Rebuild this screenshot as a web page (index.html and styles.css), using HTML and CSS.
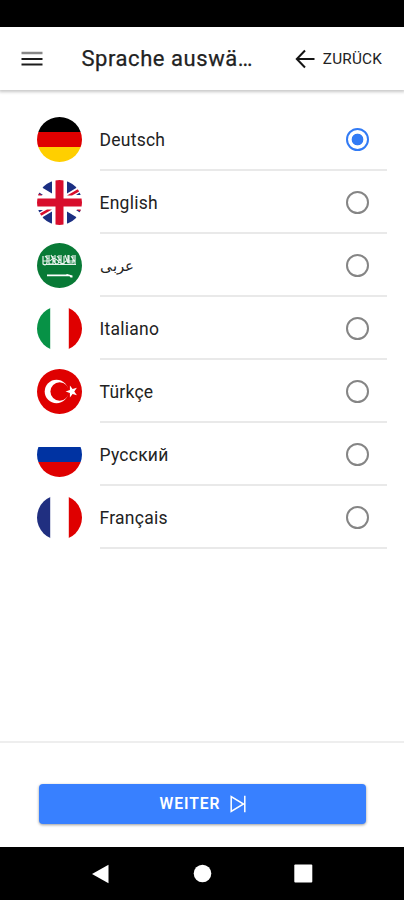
FILE: index.html
```
<!DOCTYPE html>
<html lang="de">
<head>
<meta charset="utf-8">
<title>Sprache auswählen</title>
<link rel="stylesheet" href="styles.css">
</head>
<body>
<div class="status"></div>
<header class="toolbar">
  <svg class="menu" viewBox="0 0 22 16"><path class="menu-top" d="M.5 2h21"/><path d="M.5 8h21M.5 13.500h21"/></svg>
  <h1 class="title">Sprache auswä…</h1>
  <div class="back">
    <svg class="arrow" viewBox="0 0 20 20"><path d="M10 1.500 1.800 10l8.200 8.500M2 10h17.500"/></svg>
    <span class="back-label">ZURÜCK</span>
  </div>
</header>
<main class="list">
  <div class="row">
    <svg class="flag" viewBox="0 0 45 45"><path fill="#000" d="M0 0h45v15H0z"/><path fill="#df0000" d="M0 15h45v15H0z"/><path fill="#ffcf00" d="M0 30h45v15H0z"/></svg>
    <div class="item"><span class="name">Deutsch</span><span class="radio checked"></span></div>
  </div>
  <div class="row">
    <svg class="flag" viewBox="0 0 45 45"><path fill="#fff" d="M0 0h45v45H0z"/><path fill="#1b2f82" d="M15 0v13.500L5 7.500 10 0zM30 0v13.500l10-6L35 0zM15 45V31.500L5 37.500l5 7.500zM30 45V31.500l10 6-5 7.500zM0 11l6 4H0zM45 11l-6 4h6zM0 34l6-4H0zM45 34l-6-4h6z"/><path fill="#d80d2c" d="M0 12.500 5.500 15.500H1zM30 15.500 42 8.500l2 2-9 5zM15 29.500 3 36.500l-2-2 9-5zM45 32.500l-5.500-3H44z"/><path stroke="#d80d2c" stroke-width="8" d="M22.500 0v45M0 22.500h45"/></svg>
    <div class="item"><span class="name">English</span><span class="radio"></span></div>
  </div>
  <div class="row">
    <svg class="flag" viewBox="0 0 45 45"><path fill="#087a36" d="M0 0h45v45H0z"/><g fill="none" stroke="#fff" stroke-width="1.200" stroke-opacity=".9"><path d="M6 13v8q3 2 4-1v-8M8 13l3 3M12 12v9h4v-8M14 12l4 8M18 12v8q3 3 4-2v-6M20 13l4 5M24 12v9h3v-8M28 12l3 8v-8M6 18h6M13 18q4-5 8 0t8 0h8M32 12v8h4v-8M34 13l4 6M38 12v9M6 21.500h33"/></g><path fill="#fff" d="M10 31.500h19l1-.6 5.500 1.600v2h-2l-1-1.300H10z"/></svg>
    <div class="item"><span class="name arabic" lang="ar">عربى</span><span class="radio"></span></div>
  </div>
  <div class="row">
    <svg class="flag" viewBox="0 0 45 45"><path fill="#fff" d="M0 0h45v45H0z"/><path fill="#079246" d="M0 0h13.200v45H0z"/><path fill="#df0000" d="M31.800 0H45v45H31.800z"/></svg>
    <div class="item"><span class="name">Italiano</span><span class="radio"></span></div>
  </div>
  <div class="row">
    <svg class="flag" viewBox="0 0 45 45"><path fill="#df0000" d="M0 0h45v45H0z"/><circle cx="19.500" cy="22.500" r="11.800" fill="#fff"/><circle cx="22.700" cy="22.500" r="9.300" fill="#df0000"/><path fill="#fff" d="m28.600 22.500 4.300-1.500v-4.500l2.700 3.600 4.300-1.400-2.600 3.800 2.600 3.800-4.300-1.400-2.700 3.600V24z"/></svg>
    <div class="item"><span class="name">Türkçe</span><span class="radio"></span></div>
  </div>
  <div class="row">
    <svg class="flag" viewBox="0 0 45 45"><path fill="#fff" d="M0 0h45v15H0z"/><path fill="#0033a2" d="M0 15h45v15H0z"/><path fill="#df0000" d="M0 30h45v15H0z"/></svg>
    <div class="item"><span class="name">Русский</span><span class="radio"></span></div>
  </div>
  <div class="row">
    <svg class="flag" viewBox="0 0 45 45"><path fill="#fff" d="M0 0h45v45H0z"/><path fill="#202f80" d="M0 0h13.200v45H0z"/><path fill="#df0000" d="M31.800 0H45v45H31.800z"/></svg>
    <div class="item"><span class="name">Français</span><span class="radio"></span></div>
  </div>
</main>
<footer class="footer">
  <div class="next"><span class="next-label">WEITER</span><svg class="skip" viewBox="0 0 16 18"><path d="M1.200 1.500v15L13.500 9zM14.800.8v16.400"/></svg></div>
</footer>
<nav class="nav">
  <svg viewBox="0 0 20 20"><path d="M1 10 17.500.8v18.400z"/></svg>
  <svg viewBox="0 0 20 20"><circle cx="10.500" cy="9.500" r="8.800"/></svg>
  <svg viewBox="0 0 20 20"><rect x="1.300" y=".6" width="18" height="18" rx="1"/></svg>
</nav>
</body>
</html>
```
FILE: styles.css
```
* { box-sizing: border-box; }
body {
  margin: 0;
  height: 900px;
  display: flex;
  flex-direction: column;
  background: #fff;
  color: #222;
  font-family: Roboto, "Noto Sans", sans-serif;
  overflow: hidden;
}
svg { display: block; flex: none; }
.status { height: 27px; background: #000; }
.toolbar {
  height: 63px;
  display: flex;
  align-items: center;
  padding: 1px 22px 0 21px;
  box-shadow: 0 1px 3px 1px rgba(0, 0, 0, .22);
}
.menu { width: 22px; height: 16px; fill: none; stroke: #1c1c1c; stroke-width: 2; }
.menu-top { stroke: #888; stroke-width: 2.500; }
.title {
  margin: 0 0 0 38.500px;
  font-size: 22px;
  font-weight: 400;
  letter-spacing: .55px;
  line-height: 30px;
  white-space: nowrap;
  -webkit-text-stroke: .25px #222;
}
.back { margin-left: auto; display: flex; align-items: center; gap: 8px; }
.arrow { width: 20px; height: 20px; fill: none; stroke: #151515; stroke-width: 2; }
.back-label { font-size: 15.300px; letter-spacing: .2px; line-height: 20px; }
.list { flex: 1; padding: 17.500px 17px 0 36.500px; }
.row { height: 63.100px; display: flex; align-items: center; gap: 18px; }
.flag { width: 45px; height: 45px; border-radius: 50%; }
.item {
  flex: 1;
  align-self: stretch;
  display: flex;
  align-items: center;
  justify-content: space-between;
  padding-right: 18px;
  box-shadow: inset 0 -2px #e9e9e9;
}
.name { font-size: 17.500px; line-height: 24px; letter-spacing: .25px; padding-top: 1px; }
.arabic { font-size: 15px; letter-spacing: 0; }
.radio {
  width: 23px;
  height: 23px;
  border: 2px solid #858585;
  border-radius: 50%;
}
.checked { border-color: #327bf5; background: radial-gradient(circle, #327bf5 5.500px, #fff 6.200px); }
.footer { height: 106px; border-top: 2px solid #eee; padding: 41px 38px 0 39px; }
.next {
  height: 40px;
  display: flex;
  align-items: center;
  justify-content: center;
  gap: 10px;
  padding-left: 1px;
  border-radius: 4px;
  background: #3880ff;
  box-shadow: 0 1px 3px rgba(0, 0, 0, .4);
  color: #fff;
}
.next-label { font-size: 15.700px; font-weight: 600; letter-spacing: .9px; line-height: 20px; }
.skip { width: 16px; height: 18px; fill: none; stroke: #fff; stroke-width: 1.500; }
.nav {
  height: 53px;
  display: flex;
  align-items: center;
  justify-content: center;
  gap: 81px;
  background: #000;
}
.nav svg { width: 20px; height: 20px; fill: #fff; }
```
